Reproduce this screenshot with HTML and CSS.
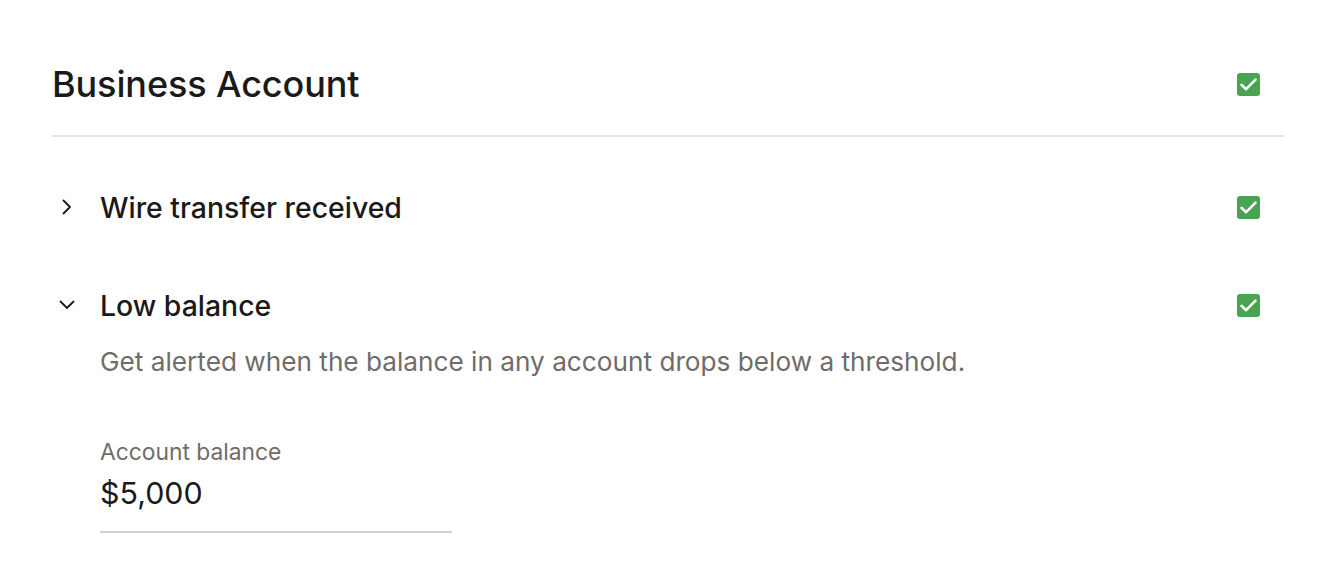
FILE: index.html
```html
<!DOCTYPE html>
<html lang="en">
<head>
    <meta charset="UTF-8">
    <title>Business Account</title>
    <link rel="stylesheet" href="styles.css">
</head>
<body>

<section class="panel">
    <header class="panel-head">
        <h1>Business Account</h1>
        <span class="check"><svg viewBox="0 0 23 23"><path d="M4.5 11.8l4.6 4.4 9.4-9.6"/></svg></span>
    </header>

    <!-- collapsed item -->
    <div class="item">
        <div class="item-row">
            <svg class="chev" viewBox="0 0 16 16"><path d="M4.5 1.5L11 8l-6.5 6.5"/></svg>
            <span class="item-title">Wire transfer received</span>
            <span class="check"><svg viewBox="0 0 23 23"><path d="M4.5 11.8l4.6 4.4 9.4-9.6"/></svg></span>
        </div>
    </div>

    <!-- expanded item -->
    <div class="item open">
        <div class="item-row">
            <svg class="chev" viewBox="0 0 16 16"><path d="M1.5 4.5L8 11l6.5-6.5"/></svg>
            <span class="item-title">Low balance</span>
            <span class="check"><svg viewBox="0 0 23 23"><path d="M4.5 11.8l4.6 4.4 9.4-9.6"/></svg></span>
        </div>
        <div class="item-body">
            <p class="desc">Get alerted when the balance in any account drops below a threshold.</p>
            <label class="field">
                <span class="field-label">Account balance</span>
                <span class="field-value">$5,000</span>
            </label>
        </div>
    </div>
</section>

</body>
</html>
```

FILE: styles.css
```css
* { box-sizing: border-box; margin: 0; padding: 0; }
body {
    font-family: 'Inter', 'Liberation Sans', sans-serif;
    color: #1b1a19;
    background: #fff;
}
.panel {
    padding: 57px 46px 0 52px;
}

/* 标题栏 */
.panel-head {
    display: flex;
    justify-content: space-between;
    align-items: center;
    padding: 0 24px 24px 0;
    border-bottom: 2px solid #e6e4e1;
}
.panel-head h1 {
    font-size: 36px;
    font-weight: 500;
    letter-spacing: -0.1px;
    line-height: 54px;
}

/* 勾选框 */
.check {
    width: 23px;
    height: 23px;
    border-radius: 3px;
    background: #4aa352;
    display: flex;
}
.check svg {
    width: 23px;
    height: 23px;
    fill: none;
    stroke: #fff;
    stroke-width: 2.6;
    stroke-linecap: round;
    stroke-linejoin: round;
}

/* 列表项 */
.item-row {
    display: flex;
    align-items: center;
    padding-right: 24px;
    height: 40px;
}
.item:first-of-type { margin-top: 50px; }
.item + .item { margin-top: 58px; }
.chev {
    width: 16px;
    height: 16px;
    margin: 0 25px 0 7px;
    fill: none;
    stroke: #1b1a19;
    stroke-width: 1.8;
    stroke-linecap: round;
    stroke-linejoin: round;
}
.item-title {
    flex: 1;
    font-size: 28.4px;
    font-weight: 500;
}
.item-body {
    padding-left: 48px;
}
.desc {
    margin-top: 19px;
    font-size: 26.2px;
    line-height: 36px;
    color: #6f6c69;
}

/* 输入框 */
.field {
    display: flex;
    flex-direction: column;
    width: 352px;
    margin-top: 57px;
    border-bottom: 2px solid #d3cfcb;
    padding-bottom: 18px;
}
.field-label {
    font-size: 22.8px;
    color: #6f6c69;
    line-height: 30px;
}
.field-value {
    font-size: 30.4px;
    color: #1b1a19;
    line-height: 40px;
    margin-top: 6px;
}
```
